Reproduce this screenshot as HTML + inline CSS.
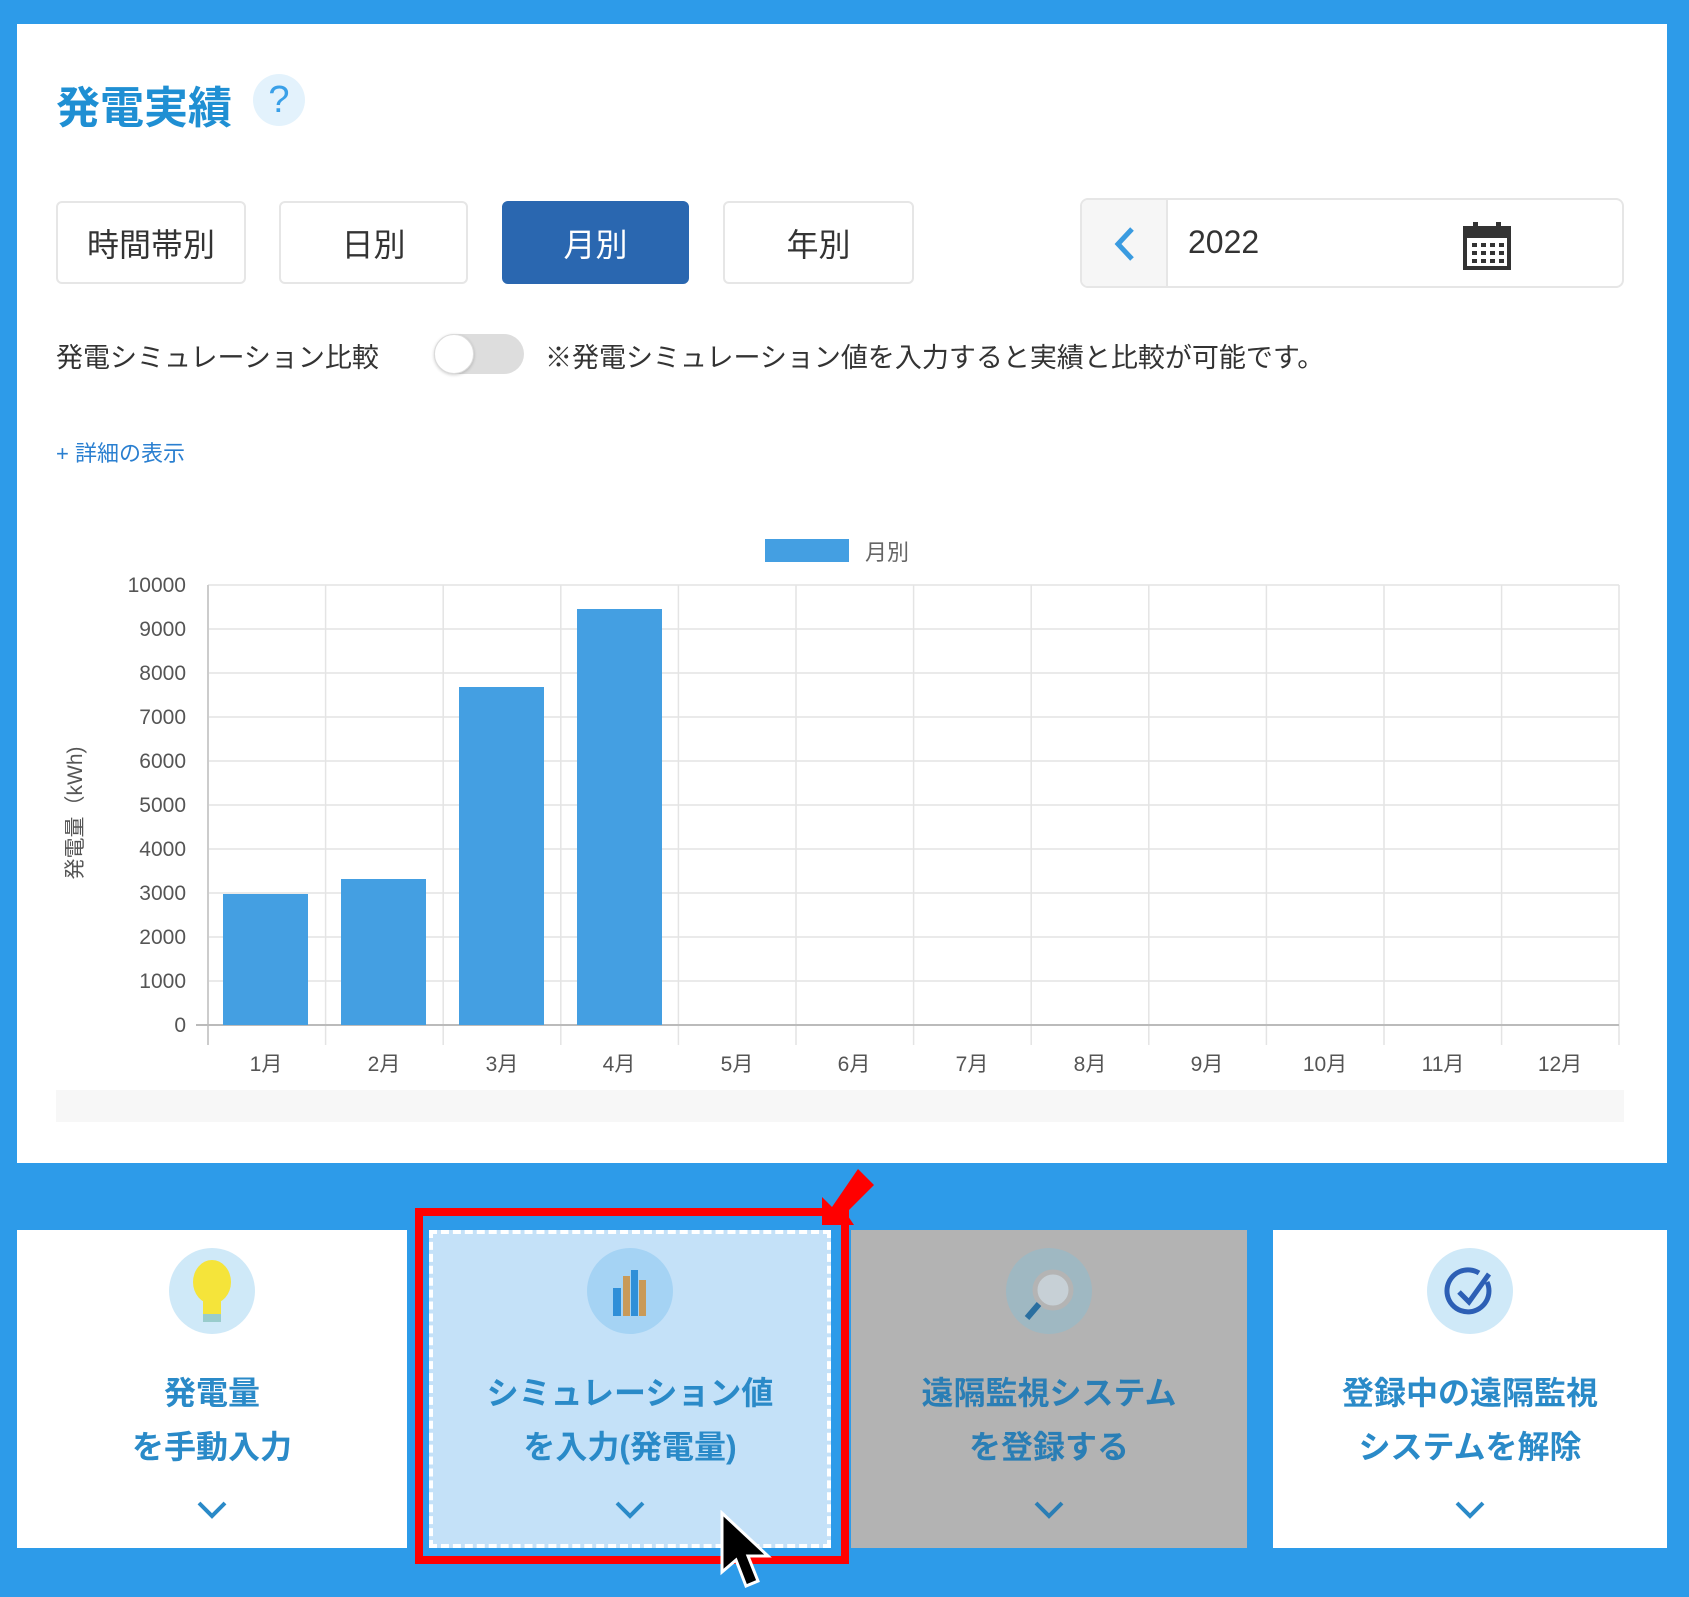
<!DOCTYPE html>
<html><head><meta charset="utf-8"><style>
*{margin:0;padding:0;box-sizing:border-box}
body{width:1689px;height:1597px;background:#2d9be9;position:relative;overflow:hidden;font-family:"Liberation Sans","Noto Sans CJK JP",sans-serif}
.a{position:absolute}
.panel{left:17px;top:24px;width:1650px;height:1139px;background:#fff}
.btn{top:201px;height:83px;border:2px solid #e6e6e6;border-radius:6px;background:#fff;font-size:32px;color:#333;display:flex;align-items:center;justify-content:center}
.card{top:1230px;height:318px;background:#fff;text-align:center;color:#2a8ac8;font-weight:bold;font-size:32px;line-height:54px}
.card .t{position:absolute;left:0;right:0;top:136px}
.ic{position:absolute;left:50%;top:18px;width:86px;height:86px;margin-left:-43px;border-radius:50%;background:#cfe9f8}
.chev{position:absolute;left:50%;top:270px;margin-left:-16px}
</style></head><body>
<div class="a panel"></div>
<div class="a" style="left:56px;top:72px;font-size:44px;font-weight:bold;color:#1f8fd3">発電実績</div>
<div class="a" style="left:253px;top:74px;width:52px;height:52px;border-radius:50%;background:#e3f2fc;color:#3aa0e8;font-size:38px;text-align:center;line-height:52px">?</div>

<div class="a btn" style="left:56px;width:190px">時間帯別</div>
<div class="a btn" style="left:279px;width:189px">日別</div>
<div class="a btn" style="left:502px;width:187px;background:#2a67b0;border-color:#2a67b0;color:#fff">月別</div>
<div class="a btn" style="left:723px;width:191px">年別</div>
<div class="a" style="left:1080px;top:198px;width:544px;height:90px;border:2px solid #e6e6e6;border-radius:8px;overflow:hidden">
 <div class="a" style="left:0;top:0;width:86px;height:86px;background:#f6f6f6;border-right:2px solid #e6e6e6"></div>
 <svg class="a" style="left:28px;top:26px" width="30" height="36"><path d="M22 3 L8 18 L22 33" stroke="#3a9be0" stroke-width="5" fill="none"/></svg>
 <div class="a" style="left:106px;top:24px;font-size:32px;color:#333">2022</div>
 <svg class="a" style="left:380px;top:20px" width="50" height="50" viewBox="0 0 50 50"><rect x="3" y="8" width="44" height="40" fill="none" stroke="#333" stroke-width="4"/><rect x="3" y="8" width="44" height="10" fill="#333"/><rect x="11" y="2" width="5" height="10" fill="#333"/><rect x="34" y="2" width="5" height="10" fill="#333"/><g fill="#333"><rect x="10" y="23" width="5" height="4"/><rect x="19" y="23" width="5" height="4"/><rect x="28" y="23" width="5" height="4"/><rect x="37" y="23" width="5" height="4"/><rect x="10" y="31" width="5" height="4"/><rect x="19" y="31" width="5" height="4"/><rect x="28" y="31" width="5" height="4"/><rect x="37" y="31" width="5" height="4"/><rect x="10" y="39" width="5" height="4"/><rect x="19" y="39" width="5" height="4"/><rect x="28" y="39" width="5" height="4"/><rect x="37" y="39" width="5" height="4"/></g></svg>
</div>

<div class="a" style="left:56px;top:336px;font-size:27px;color:#333">発電シミュレーション比較</div>
<div class="a" style="left:434px;top:334px;width:90px;height:40px;border-radius:20px;background:#ddd"></div>
<div class="a" style="left:434px;top:334px;width:40px;height:40px;border-radius:50%;background:#fff;border:1px solid #ddd;box-shadow:0 1px 3px rgba(0,0,0,.2)"></div>
<div class="a" style="left:545px;top:336px;font-size:27px;color:#333">※発電シミュレーション値を入力すると実績と比較が可能です。</div>
<div class="a" style="left:56px;top:436px;font-size:22px;color:#2a7fd0">+ 詳細の表示</div>

<svg class="a" style="left:0;top:0" width="1689" height="1200">
 <rect x="765" y="539" width="84" height="23" fill="#449fe2"/>
 <text x="865" y="560" font-size="22" fill="#666" font-family="Liberation Sans,Noto Sans CJK JP,sans-serif">月別</text>
 <g stroke="#e4e4e4" stroke-width="1.5">
  <line x1="208" y1="585" x2="1619" y2="585"/><line x1="208" y1="629" x2="1619" y2="629"/><line x1="208" y1="673" x2="1619" y2="673"/><line x1="208" y1="717" x2="1619" y2="717"/><line x1="208" y1="761" x2="1619" y2="761"/><line x1="208" y1="805" x2="1619" y2="805"/><line x1="208" y1="849" x2="1619" y2="849"/><line x1="208" y1="893" x2="1619" y2="893"/><line x1="208" y1="937" x2="1619" y2="937"/><line x1="208" y1="981" x2="1619" y2="981"/>
  <line x1="325.6" y1="585" x2="325.6" y2="1045"/><line x1="443.2" y1="585" x2="443.2" y2="1045"/><line x1="560.8" y1="585" x2="560.8" y2="1045"/><line x1="678.4" y1="585" x2="678.4" y2="1045"/><line x1="796" y1="585" x2="796" y2="1045"/><line x1="913.6" y1="585" x2="913.6" y2="1045"/><line x1="1031.2" y1="585" x2="1031.2" y2="1045"/><line x1="1148.8" y1="585" x2="1148.8" y2="1045"/><line x1="1266.4" y1="585" x2="1266.4" y2="1045"/><line x1="1384" y1="585" x2="1384" y2="1045"/><line x1="1501.6" y1="585" x2="1501.6" y2="1045"/><line x1="1619" y1="585" x2="1619" y2="1045"/>
 </g>
 <line x1="208" y1="585" x2="208" y2="1045" stroke="#ccc" stroke-width="2"/>
 <line x1="196" y1="1025" x2="1619" y2="1025" stroke="#bbb" stroke-width="2"/>
 <g fill="#449fe2">
  <rect x="223" y="894" width="85" height="131"/>
  <rect x="341" y="879" width="85" height="146"/>
  <rect x="459" y="687" width="85" height="338"/>
  <rect x="577" y="609" width="85" height="416"/>
 </g>
 <g font-size="21" fill="#555" text-anchor="end" font-family="Liberation Sans,sans-serif">
  <text x="186" y="592">10000</text><text x="186" y="636">9000</text><text x="186" y="680">8000</text><text x="186" y="724">7000</text><text x="186" y="768">6000</text><text x="186" y="812">5000</text><text x="186" y="856">4000</text><text x="186" y="900">3000</text><text x="186" y="944">2000</text><text x="186" y="988">1000</text><text x="186" y="1032">0</text>
 </g>
 <g font-size="21" fill="#555" text-anchor="middle" font-family="Liberation Sans,Noto Sans CJK JP,sans-serif">
  <text x="266" y="1071">1月</text><text x="384" y="1071">2月</text><text x="502" y="1071">3月</text><text x="619" y="1071">4月</text><text x="737" y="1071">5月</text><text x="854" y="1071">6月</text><text x="972" y="1071">7月</text><text x="1090" y="1071">8月</text><text x="1207" y="1071">9月</text><text x="1325" y="1071">10月</text><text x="1443" y="1071">11月</text><text x="1560" y="1071">12月</text>
 </g>
 <text transform="translate(82 813) rotate(-90)" font-size="21" fill="#555" text-anchor="middle" font-family="Liberation Sans,Noto Sans CJK JP,sans-serif">発電量（kWh)</text>
 <rect x="56" y="1090" width="1568" height="32" fill="#f7f7f7"/>
</svg>

<div class="a card" style="left:17px;width:390px">
 <div class="ic"></div>
 <svg class="a" style="left:172px;top:28px" width="46" height="70"><ellipse cx="23" cy="24" rx="19" ry="22" fill="#f5e43a"/><rect x="14" y="40" width="18" height="16" fill="#f5e43a"/><rect x="14" y="56" width="18" height="8" fill="#9cc"/></svg>
 <div class="t">発電量<br>を手動入力</div>
 <svg class="chev" width="32" height="20"><path d="M3 3 L16 16 L29 3" stroke="#2a8ac8" stroke-width="4" fill="none"/></svg>
</div>
<div class="a card" style="left:429px;width:402px;background:#c4e1f8;border:4px dashed #fff;outline:3px solid #2d9be9">
 <div class="ic" style="background:#a5d3f4;top:14px"></div>
 <svg class="a" style="left:178px;top:34px" width="44" height="50"><rect x="2" y="20" width="8" height="28" fill="#2f8fd8"/><rect x="12" y="8" width="7" height="40" fill="#c99a58"/><rect x="20" y="2" width="7" height="46" fill="#2f8fd8"/><rect x="28" y="12" width="7" height="36" fill="#c99a58"/></svg>
 <div class="t" style="top:132px">シミュレーション値<br>を入力(発電量)</div>
 <svg class="chev" style="top:266px" width="32" height="20"><path d="M3 3 L16 16 L29 3" stroke="#2a8ac8" stroke-width="4" fill="none"/></svg>
</div>
<div class="a card" style="left:851px;width:396px;background:#b3b3b3;color:#2a7eb5">
 <div class="ic" style="background:#9fb8c2"></div>
 <svg class="a" style="left:168px;top:34px" width="60" height="60"><circle cx="34" cy="26" r="18" fill="#c7d0d6" stroke="#b4b4b4" stroke-width="5"/><line x1="20" y1="40" x2="8" y2="54" stroke="#2a6fa0" stroke-width="6"/></svg>
 <div class="t">遠隔監視システム<br>を登録する</div>
 <svg class="chev" width="32" height="20"><path d="M3 3 L16 16 L29 3" stroke="#2a7eb5" stroke-width="4" fill="none"/></svg>
</div>
<div class="a card" style="left:1273px;width:394px">
 <div class="ic"></div>
 <svg class="a" style="left:170px;top:34px" width="56" height="56"><path d="M44 18 A21 21 0 1 1 36 9" stroke="#2d5fb5" stroke-width="5" fill="none"/><path d="M16 28 L26 38 L46 10" stroke="#2d5fb5" stroke-width="5" fill="none"/></svg>
 <div class="t">登録中の遠隔監視<br>システムを解除</div>
 <svg class="chev" width="32" height="20"><path d="M3 3 L16 16 L29 3" stroke="#2a8ac8" stroke-width="4" fill="none"/></svg>
</div>

<div class="a" style="left:415px;top:1208px;width:434px;height:356px;border:8px solid #f00"></div>
<svg class="a" style="left:820px;top:1165px" width="60" height="65"><path d="M2 60 L2 32 L12 42 L38 4 L54 20 L26 48 L34 60 Z" fill="#f00"/></svg>
<svg class="a" style="left:718px;top:1510px" width="60" height="87"><path d="M4 3 L4 62 L18 50 L28 76 L40 71 L30 46 L50 46 Z" fill="#000" stroke="#fff" stroke-width="3"/></svg>
</body></html>
